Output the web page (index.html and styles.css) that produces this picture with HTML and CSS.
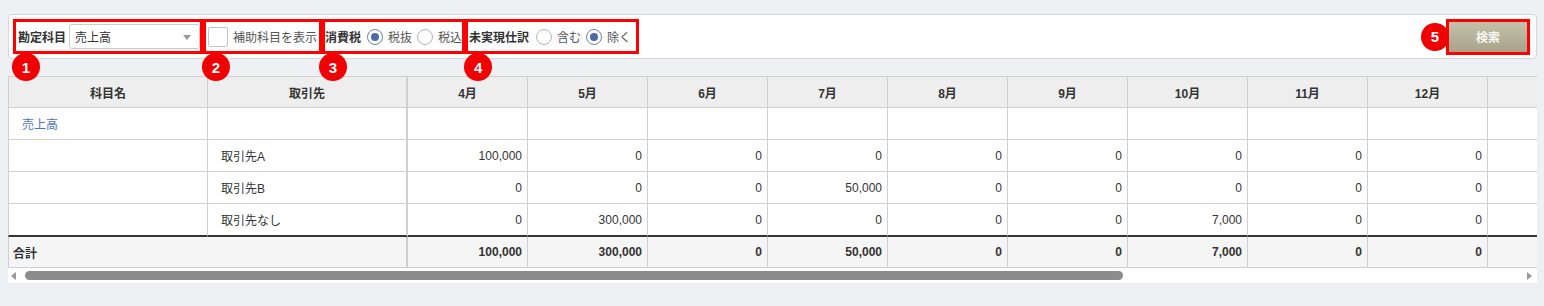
FILE: index.html
```html
<!DOCTYPE html>
<html lang="ja">
<head>
    <meta charset="UTF-8">
    <title>推移表</title>
    <link rel="stylesheet" href="styles.css">
</head>
<body>
    <div class="page">
        <div class="toolbar">
            <div class="mark field field-account">
                <span class="field-label">勘定科目</span>
                <div class="select"><span>売上高</span><span class="caret"></span></div>
                <span class="badge">1</span>
            </div>
            <div class="mark field field-sub">
                <label class="check"><input type="checkbox"><span>補助科目を表示</span></label>
                <span class="badge">2</span>
            </div>
            <div class="mark field field-tax">
                <span class="field-label">消費税</span>
                <label class="opt"><input type="radio" name="tax" checked><span>税抜</span></label>
                <label class="opt"><input type="radio" name="tax"><span>税込</span></label>
                <span class="badge badge-3">3</span>
            </div>
            <div class="mark field field-unreal">
                <span class="field-label">未実現仕訳</span>
                <label class="opt"><input type="radio" name="unreal"><span>含む</span></label>
                <label class="opt"><input type="radio" name="unreal" checked><span>除く</span></label>
                <span class="badge">4</span>
            </div>
            <div class="mark search-wrap">
                <button class="search" type="button">検索</button>
                <span class="badge badge-side">5</span>
            </div>
        </div>

        <div class="grid-wrap">
            <div class="grid-scroll">
                <table class="grid">
                    <thead>
                        <tr>
                            <th class="c-name">科目名</th>
                            <th class="c-partner">取引先</th>
                            <th>4月</th><th>5月</th><th>6月</th><th>7月</th><th>8月</th><th>9月</th>
                            <th>10月</th><th>11月</th><th>12月</th><th>1月</th><th>2月</th><th>3月</th><th>合計</th>
                        </tr>
                    </thead>
                    <tbody>
                        <tr>
                            <td class="c-name"><a class="acc-link" href="#">売上高</a></td>
                            <td class="c-partner"></td>
                            <td></td><td></td><td></td><td></td><td></td><td></td>
                            <td></td><td></td><td></td><td></td><td></td><td></td><td></td>
                        </tr>
                        <tr>
                            <td class="c-name"></td>
                            <td class="c-partner">取引先A</td>
                            <td class="num">100,000</td><td class="num">0</td><td class="num">0</td><td class="num">0</td><td class="num">0</td><td class="num">0</td>
                            <td class="num">0</td><td class="num">0</td><td class="num">0</td><td class="num">0</td><td class="num">0</td><td class="num">0</td><td class="num">100,000</td>
                        </tr>
                        <tr>
                            <td class="c-name"></td>
                            <td class="c-partner">取引先B</td>
                            <td class="num">0</td><td class="num">0</td><td class="num">0</td><td class="num">50,000</td><td class="num">0</td><td class="num">0</td>
                            <td class="num">0</td><td class="num">0</td><td class="num">0</td><td class="num">0</td><td class="num">0</td><td class="num">0</td><td class="num">50,000</td>
                        </tr>
                        <tr class="last">
                            <td class="c-name"></td>
                            <td class="c-partner">取引先なし</td>
                            <td class="num">0</td><td class="num">300,000</td><td class="num">0</td><td class="num">0</td><td class="num">0</td><td class="num">0</td>
                            <td class="num">7,000</td><td class="num">0</td><td class="num">0</td><td class="num">0</td><td class="num">0</td><td class="num">0</td><td class="num">307,000</td>
                        </tr>
                    </tbody>
                    <tfoot>
                        <tr class="total">
                            <td class="c-name c-total" colspan="2">合計</td>
                            <td class="num">100,000</td><td class="num">300,000</td><td class="num">0</td><td class="num">50,000</td><td class="num">0</td><td class="num">0</td>
                            <td class="num">7,000</td><td class="num">0</td><td class="num">0</td><td class="num">0</td><td class="num">0</td><td class="num">0</td><td class="num">457,000</td>
                        </tr>
                    </tfoot>
                </table>
            </div>
            <div class="hscroll">
                <span class="arrow arrow-left"></span>
                <span class="thumb"></span>
                <span class="arrow arrow-right"></span>
            </div>
        </div>
    </div>
</body>
</html>
```

FILE: styles.css
```css
body {
    margin: 0;
    background: #eff0f4;
    font-family: 'Liberation Sans', 'Noto Sans CJK JP', Arial, sans-serif;
    font-size: 12px;
    color: #333;
}
.page {
    padding: 14px 7px 0 8px;
}
.toolbar {
    display: flex;
    align-items: center;
    height: 45px;
    box-sizing: border-box;
    padding: 0 6px 0 4px;
    background: #fff;
    border: 1px solid #d6d6d6;
    border-radius: 4px;
}
.mark {
    position: relative;
    border: 3px solid #ff0000;
}
.field {
    display: flex;
    align-items: center;
    height: 35px;
    box-sizing: border-box;
    padding: 0 2px;
}
.field-label {
    font-weight: bold;
    color: #333;
}
.field-account {
    padding-right: 0;
}
.field-account .select {
    margin-left: 3px;
}
.select {
    position: relative;
    width: 131px;
    height: 25px;
    box-sizing: border-box;
    padding-left: 5px;
    display: flex;
    align-items: center;
    border: 1px solid #ccc;
    border-radius: 3px;
    background: #fff;
    color: #333;
}
.caret {
    position: absolute;
    right: 8px;
    top: 10px;
    border-left: 4px solid transparent;
    border-right: 4px solid transparent;
    border-top: 5px solid #9a9a9a;
}
.check {
    display: flex;
    align-items: center;
    gap: 5px;
    color: #555;
}
.check input {
    appearance: none;
    margin: 0;
    width: 20px;
    height: 20px;
    border: 1px solid #c4c4c4;
    border-radius: 2px;
    background: #fff;
}
.field-tax {
    padding: 0;
}
.field-tax .field-label {
    margin-right: 6px;
}
.field-unreal {
    padding: 0 5px 0 1px;
}
.field-unreal .field-label {
    margin-right: 7px;
}
.opt {
    display: flex;
    align-items: center;
    gap: 5px;
    color: #555;
    margin-right: 5px;
}
.opt:last-of-type {
    margin-right: 0;
}
.opt input {
    appearance: none;
    margin: 0;
    width: 16px;
    height: 16px;
    border: 1px solid #b5b5b5;
    border-radius: 50%;
    background: #fff;
    position: relative;
}
.opt input:checked {
    border-color: #6d7fa8;
}
.opt input:checked::after {
    content: "";
    position: absolute;
    left: 3px;
    top: 3px;
    width: 8px;
    height: 8px;
    border-radius: 50%;
    background: #4d68ad;
}
.search-wrap {
    margin-left: auto;
    display: flex;
}
.search {
    width: 78px;
    height: 30px;
    border: none;
    margin: 0;
    background: linear-gradient(180deg, #c3c0aa 0%, #a8a48b 100%);
    color: #f7f7f2;
    font-family: inherit;
    font-size: 12px;
    font-weight: bold;
    cursor: pointer;
}
.badge {
    position: absolute;
    left: -4px;
    top: 31px;
    width: 28px;
    height: 28px;
    border-radius: 50%;
    background: #f00000;
    color: #fff;
    font-family: 'Liberation Sans', Arial, sans-serif;
    font-size: 15px;
    font-weight: bold;
    display: flex;
    align-items: center;
    justify-content: center;
    z-index: 2;
}
.badge-3 {
    left: -6px;
}
.badge-side {
    left: -28px;
    top: 1px;
}

.grid-wrap {
    margin-top: 17px;
}
.grid-scroll {
    overflow: hidden;
}
.grid {
    border-collapse: separate;
    border-spacing: 0;
    table-layout: fixed;
    width: 1960px;
}
.grid th,
.grid td {
    box-sizing: border-box;
    width: 120px;
    height: 32px;
    padding: 0 5px;
    border-right: 1px solid #cfcfcf;
    border-bottom: 1px solid #cfcfcf;
    background: #fff;
    white-space: nowrap;
}
.grid th {
    border-top: 1px solid #cfcfcf;
    background: #eeeeee;
    font-weight: bold;
    text-align: center;
}
.grid .c-name {
    width: 200px;
    border-left: 1px solid #cfcfcf;
    padding-left: 13px;
}
.grid .c-partner {
    width: 200px;
    border-right: 2px solid #cfcfcf;
    padding-left: 13px;
}
.grid th.c-name,
.grid th.c-partner {
    padding-left: 5px;
}
.grid .num {
    text-align: right;
}
.acc-link {
    color: #4d74c2;
    text-decoration: none;
}
.grid .last td {
    height: 33px;
    border-bottom: 2px solid #333;
}
.grid .total td {
    height: 31px;
    background: #f5f5f5;
    font-weight: bold;
}
.grid .total .c-total {
    border-right: 2px solid #cfcfcf;
    padding-left: 4px;
}

.hscroll {
    display: flex;
    align-items: center;
    height: 15px;
    background: #fff;
}
.arrow {
    width: 0;
    height: 0;
    border-top: 4px solid transparent;
    border-bottom: 4px solid transparent;
}
.arrow-left {
    margin-left: 3px;
    border-right: 5px solid #9a9a9a;
}
.arrow-right {
    margin-left: auto;
    margin-right: 5px;
    border-left: 5px solid #9a9a9a;
}
.thumb {
    margin-left: 9px;
    width: 1098px;
    height: 9px;
    border-radius: 5px;
    background: #8c8c8c;
}
```
